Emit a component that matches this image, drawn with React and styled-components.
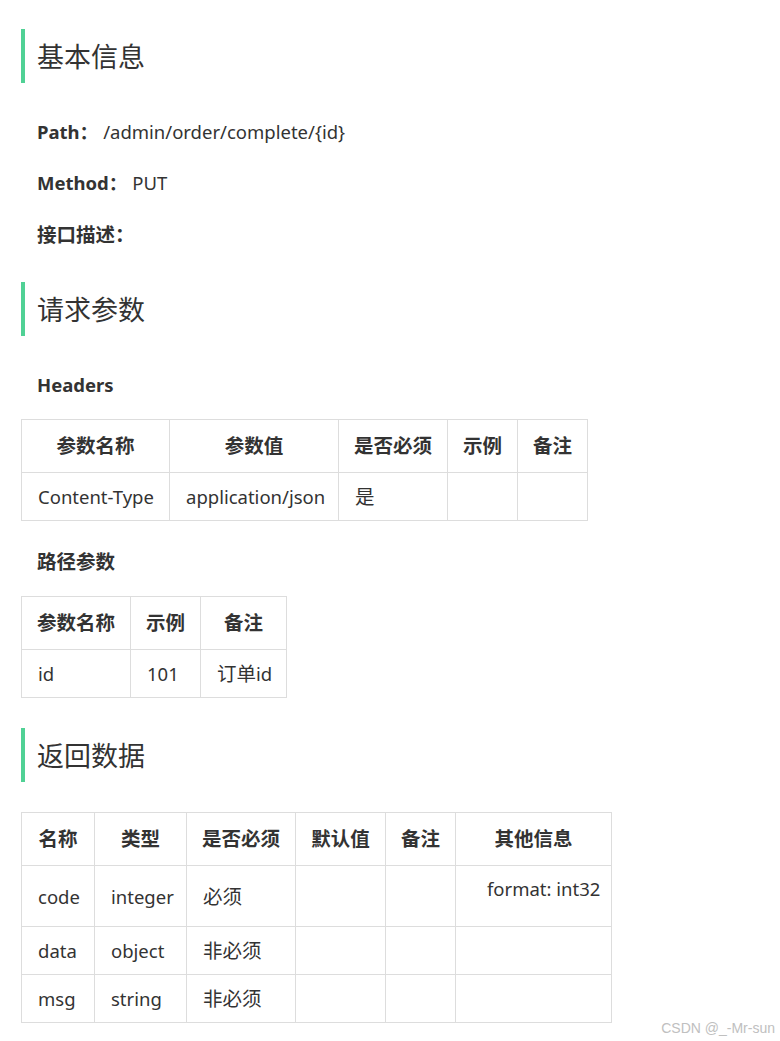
import React from "react";
import styled, { createGlobalStyle } from "styled-components";

const Global = createGlobalStyle`
  html, body { margin: 0; padding: 0; background: #fff; }
  body {
    font-family: "Noto Sans", "Noto Sans CJK SC", sans-serif;
    color: #333;
    font-size: 18.5px;
  }
`;

const Page = styled.div`
  position: relative;
  width: 780px;
  height: 1041px;
  box-sizing: border-box;
  padding: 29px 0 0 21px;
  display: flex;
  flex-direction: column;
  align-items: flex-start;
  overflow: hidden;
`;

const Heading = styled.h2`
  margin: ${(p) => p.$mt || 0}px 0 0 0;
  height: 54px;
  box-sizing: border-box;
  border-left: 4px solid #50d195;
  padding-left: 12px;
  display: flex;
  align-items: center;
  font-size: 27px;
  font-weight: 400;
  color: #333;
  line-height: 1;
`;

const InfoLine = styled.p`
  margin: ${(p) => p.$mt}px 0 0 16px;
  line-height: 28px;
  font-size: 18.5px;
`;

const Key = styled.strong`
  font-weight: 700;
  margin-right: 5px;
`;

const Han = styled.span`
  font-size: 19.5px;
`;

const SubTitle = styled.h4`
  margin: ${(p) => p.$mt}px 0 0 16px;
  line-height: 28px;
  font-size: 18.5px;
  font-weight: 700;
`;

const Table = styled.table`
  margin-top: ${(p) => p.$mt}px;
  width: ${(p) => p.$width}px;
  border-collapse: collapse;
  table-layout: fixed;
  font-size: 18.5px;
`;

const Th = styled.th`
  border: 1px solid #dddddd;
  padding: 12px 14px;
  line-height: 28px;
  font-size: 19.5px;
  font-weight: 700;
  text-align: center;
  white-space: nowrap;
`;

const Td = styled.td`
  border: 1px solid #dddddd;
  padding: 10px 16px;
  line-height: 27px;
  text-align: left;
  vertical-align: ${(p) => (p.$top ? "top" : "middle")};
  white-space: nowrap;
`;

const Extra = styled.div`
  margin: -1px 0 13px 15px;
  line-height: 28px;
`;

const Watermark = styled.div`
  position: absolute;
  right: 5px;
  bottom: 5px;
  font-family: "Liberation Sans", "Noto Sans CJK SC", sans-serif;
  font-size: 14px;
  color: #c0c0c0;
`;

const Cols = ({ widths }) => (
  <colgroup>
    {widths.map((w, i) => (
      <col key={i} style={{ width: w }} />
    ))}
  </colgroup>
);

const sum = (a) => a.reduce((s, v) => s + v, 0);

const headerCols = [148, 169, 109, 70, 70];
const pathCols = [109, 70, 86];
const respCols = [73, 92, 109, 90, 70, 156];

export default function App() {
  return (
    <>
      <Global />
      <Page>
        <Heading>基本信息</Heading>
        <InfoLine $mt={35}>
          <Key>Path：</Key>/admin/order/complete/{"{id}"}
        </InfoLine>
        <InfoLine $mt={23}>
          <Key>Method：</Key>PUT
        </InfoLine>
        <InfoLine $mt={24}>
          <Key>
            <Han>接口描述：</Han>
          </Key>
        </InfoLine>

        <Heading $mt={33}>请求参数</Heading>
        <SubTitle $mt={35}>Headers</SubTitle>
        <Table $mt={20} $width={sum(headerCols)}>
          <Cols widths={headerCols} />
          <thead>
            <tr>
              <Th>参数名称</Th>
              <Th>参数值</Th>
              <Th>是否必须</Th>
              <Th>示例</Th>
              <Th>备注</Th>
            </tr>
          </thead>
          <tbody>
            <tr>
              <Td>Content-Type</Td>
              <Td>application/json</Td>
              <Td>
                <Han>是</Han>
              </Td>
              <Td></Td>
              <Td></Td>
            </tr>
          </tbody>
        </Table>

        <SubTitle $mt={27}>
          <Han>路径参数</Han>
        </SubTitle>
        <Table $mt={20} $width={sum(pathCols)}>
          <Cols widths={pathCols} />
          <thead>
            <tr>
              <Th>参数名称</Th>
              <Th>示例</Th>
              <Th>备注</Th>
            </tr>
          </thead>
          <tbody>
            <tr>
              <Td>id</Td>
              <Td>101</Td>
              <Td>
                <Han>订单</Han>id
              </Td>
            </tr>
          </tbody>
        </Table>

        <Heading $mt={30}>返回数据</Heading>
        <Table $mt={30} $width={sum(respCols)}>
          <Cols widths={respCols} />
          <thead>
            <tr>
              <Th>名称</Th>
              <Th>类型</Th>
              <Th>是否必须</Th>
              <Th>默认值</Th>
              <Th>备注</Th>
              <Th>其他信息</Th>
            </tr>
          </thead>
          <tbody>
            <tr>
              <Td>code</Td>
              <Td>integer</Td>
              <Td>
                <Han>必须</Han>
              </Td>
              <Td></Td>
              <Td></Td>
              <Td $top>
                <Extra>format: int32</Extra>
              </Td>
            </tr>
            <tr>
              <Td>data</Td>
              <Td>object</Td>
              <Td>
                <Han>非必须</Han>
              </Td>
              <Td></Td>
              <Td></Td>
              <Td></Td>
            </tr>
            <tr>
              <Td>msg</Td>
              <Td>string</Td>
              <Td>
                <Han>非必须</Han>
              </Td>
              <Td></Td>
              <Td></Td>
              <Td></Td>
            </tr>
          </tbody>
        </Table>
        <Watermark>CSDN @_-Mr-sun</Watermark>
      </Page>
    </>
  );
}
